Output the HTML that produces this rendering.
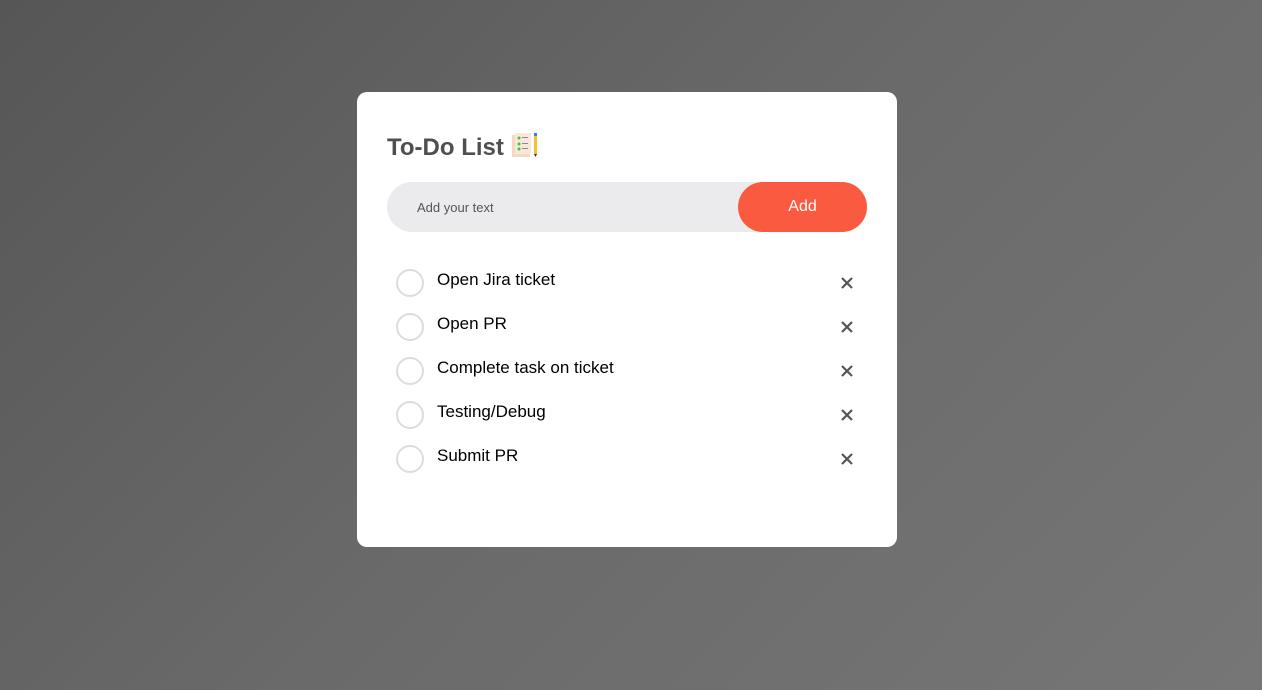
<!DOCTYPE html>
<html><head><style>
html,body{margin:0;width:1262px;height:690px;overflow:hidden}
body{background:linear-gradient(135deg,#565656 0%,#6a6a6a 50%,#767676 100%);font-family:"Liberation Sans",Arial,sans-serif;position:relative}
.card{position:absolute;left:357px;top:92px;width:540px;height:455px;background:#fff;border-radius:10px}
h2{position:absolute;left:30px;top:40px;margin:0;font-size:24px;font-weight:bold;color:#4f4f4f;line-height:32px}
.inp{position:absolute;left:30px;top:90px;width:480px;height:50px;background:#ebebed;border-radius:25px}
.inp span{position:absolute;left:30px;top:18px;font-size:13px;color:#555}
.btn{position:absolute;right:0;top:0;width:129px;height:50px;background:#fa5a3f;border-radius:25px;color:#fff;font-size:16px;text-align:center;line-height:50px}
.item{position:absolute;left:39px;height:28px}
.c{position:absolute;left:0;top:0;width:24px;height:24px;border:2px solid #ddd;border-radius:50%}
.t{position:absolute;left:41px;top:1px;font-size:17px;color:#000;white-space:nowrap}
.x{position:absolute;left:445px;top:8px}
</style></head><body>
<div class="card">
<h2>To-Do List <svg width="28" height="26" viewBox="0 0 28 26" style="vertical-align:-3px"><rect x="1" y="3" width="18" height="22" fill="#f7d8c4"/><rect x="4" y="1" width="16" height="21" fill="#fbe7d8"/><circle cx="8" cy="6" r="1.5" fill="#3c3"/><circle cx="8" cy="12" r="1.5" fill="#3c3"/><circle cx="8" cy="17" r="1.5" fill="#3c3"/><rect x="11" y="5" width="6" height="1" fill="#88a"/><rect x="11" y="11" width="6" height="1" fill="#88a"/><rect x="11" y="16" width="6" height="1" fill="#88a"/><rect x="23" y="1" width="3" height="3" fill="#47f"/><rect x="23" y="4" width="3" height="18" fill="#f5c030"/><path d="M23 22h3l-1.5 3z" fill="#333"/></svg></h2>
<div class="inp"><span>Add your text</span><div class="btn">Add</div></div>
<div class="item" style="top:177px"><div class="c"></div><div class="t">Open Jira ticket</div><svg class="x" width="12" height="12"><path d="M1 1L11 11M11 1L1 11" stroke="#555" stroke-width="2.2"/></svg></div>
<div class="item" style="top:221px"><div class="c"></div><div class="t">Open PR</div><svg class="x" width="12" height="12"><path d="M1 1L11 11M11 1L1 11" stroke="#555" stroke-width="2.2"/></svg></div>
<div class="item" style="top:265px"><div class="c"></div><div class="t">Complete task on ticket</div><svg class="x" width="12" height="12"><path d="M1 1L11 11M11 1L1 11" stroke="#555" stroke-width="2.2"/></svg></div>
<div class="item" style="top:309px"><div class="c"></div><div class="t">Testing/Debug</div><svg class="x" width="12" height="12"><path d="M1 1L11 11M11 1L1 11" stroke="#555" stroke-width="2.2"/></svg></div>
<div class="item" style="top:353px"><div class="c"></div><div class="t">Submit PR</div><svg class="x" width="12" height="12"><path d="M1 1L11 11M11 1L1 11" stroke="#555" stroke-width="2.2"/></svg></div>
</div>
</body></html>
